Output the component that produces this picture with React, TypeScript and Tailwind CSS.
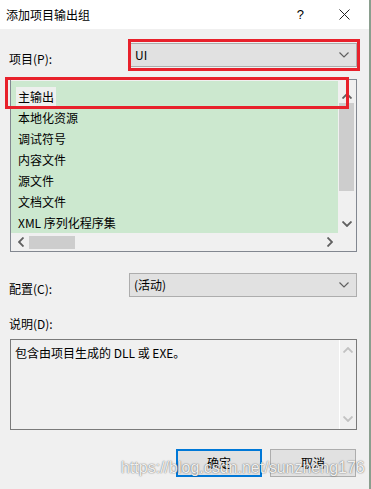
import React from "react";

const font = { fontFamily: '"Noto Sans CJK SC", "Microsoft YaHei", sans-serif' };

function ChevronDown({ color = "#606060", className = "" }: { color?: string; className?: string }) {
  return (
    <svg width="10" height="6" viewBox="0 0 10 6" className={className}>
      <path d="M0.5 0.5 L5 5 L9.5 0.5" fill="none" stroke={color} strokeWidth="1.2" />
    </svg>
  );
}
function ChevronUp({ color = "#606060" }: { color?: string }) {
  return (
    <svg width="10" height="6" viewBox="0 0 10 6">
      <path d="M0.5 5.5 L5 1 L9.5 5.5" fill="none" stroke={color} strokeWidth="1.8" />
    </svg>
  );
}
function ChevronDownBold({ color = "#606060" }: { color?: string }) {
  return (
    <svg width="10" height="6" viewBox="0 0 10 6">
      <path d="M0.5 0.5 L5 5 L9.5 0.5" fill="none" stroke={color} strokeWidth="1.8" />
    </svg>
  );
}
function ChevronLeft() {
  return (
    <svg width="6" height="10" viewBox="0 0 6 10">
      <path d="M5.5 0.5 L1 5 L5.5 9.5" fill="none" stroke="#606060" strokeWidth="1.8" />
    </svg>
  );
}
function ChevronRight() {
  return (
    <svg width="6" height="10" viewBox="0 0 6 10">
      <path d="M0.5 0.5 L5 5 L0.5 9.5" fill="none" stroke="#606060" strokeWidth="1.8" />
    </svg>
  );
}

const items = ["主输出", "本地化资源", "调试符号", "内容文件", "源文件", "文档文件", "XML 序列化程序集"];

export default function App() {
  return (
    <div
      className="relative w-[371px] h-[489px] bg-[#f0f0f0] text-[12px] text-black overflow-hidden border-r-2 border-[#8a9e8e]"
      style={font}
    >
      {/* Title bar */}
      <div className="h-[29px] bg-white flex items-center">
        <span className="ml-[6px] leading-[16px] text-[12px]">添加项目输出组</span>
        <span className="ml-auto mr-[35px] text-[13px] leading-[16px]" style={{ fontFamily: '"Liberation Sans", sans-serif' }}>?</span>
        <svg width="11" height="11" viewBox="0 0 11 11" className="mr-[19px]">
          <path d="M0.5 0.5 L10.5 10.5 M10.5 0.5 L0.5 10.5" stroke="#222" strokeWidth="1" />
        </svg>
      </div>

      {/* Project row */}
      <div className="mt-[14px] flex items-center h-[24px]">
        <span className="w-[129px] pl-[9px] leading-[16px] pt-[8px]">项目(P):</span>
        <div className="w-[228px] h-[24px] bg-[#e1e1e1] border border-[#adadad] flex items-center pl-[5px] pr-[7px]">
          <span className="leading-[16px]">UI</span>
          <ChevronDown className="ml-auto" />
        </div>
      </div>

      {/* List box */}
      <div className="mt-[12px] ml-[10px] w-[347px] h-[173px] border border-[#828790] flex flex-col">
        <div className="flex flex-1 pt-[1px]">
          <div className="w-[327px] bg-[#cce8cf] pt-[5px] pl-[1px]">
            {items.map((it, i) => (
              <div key={it} className="h-[21px] flex items-center">
                <span
                  className={
                    "h-[19px] flex items-center px-[2px] ml-[4px] leading-[16px] " +
                    (i === 0 ? "bg-[#eef0ee]" : "")
                  }
                >
                  {it}
                </span>
              </div>
            ))}
          </div>
          <div className="w-[17px] bg-[#f0f0f0] flex flex-col items-center">
            <div className="h-[22px] flex items-center justify-center pt-[8px]">
              <ChevronUp />
            </div>
            <div className="w-[15px] h-[88px] bg-[#cdcdcd]" />
            <div className="flex-1 flex items-end justify-center pb-[6px]">
              <ChevronDownBold />
            </div>
          </div>
        </div>
        <div className="h-[18px] flex bg-[#f0f0f0]">
          <div className="w-[328px] flex items-center">
            <div className="w-[18px] flex justify-center pl-[2px]">
              <ChevronLeft />
            </div>
            <div className="w-[46px] h-[13px] bg-[#cdcdcd]" />
            <div className="ml-auto w-[17px] flex justify-center pr-[2px]">
              <ChevronRight />
            </div>
          </div>
        </div>
      </div>

      {/* Config row */}
      <div className="mt-[21px] flex items-center h-[24px]">
        <span className="w-[129px] pl-[9px] leading-[16px] pt-[8px]">配置(C):</span>
        <div className="w-[228px] h-[24px] bg-[#e1e1e1] border border-[#adadad] flex items-center pl-[4px] pr-[7px]">
          <span className="leading-[16px]">(活动)</span>
          <ChevronDown className="ml-auto" />
        </div>
      </div>

      {/* Description */}
      <div className="mt-[19px] h-[16px] leading-[16px] pl-[9px]">说明(D):</div>
      <div className="mt-[7px] ml-[10px] w-[347px] h-[91px] border border-[#7a7a7a] flex">
        <div className="flex-1 pl-[4px] pt-[5px] leading-[16px]">包含由项目生成的 DLL 或 EXE。</div>
        <div className="w-[17px] border-l border-white flex flex-col items-center justify-between py-[7px]">
          <ChevronUp color="#c2c2c2" />
          <ChevronDownBold color="#c2c2c2" />
        </div>
      </div>

      {/* Buttons */}
      <div className="mt-[19px] flex justify-end pr-[13px] gap-[8px]">
        <button className="w-[86px] h-[28px] bg-[#e1e1e1] border-2 border-[#0078d7] leading-[16px]">确定</button>
        <button className="w-[86px] h-[28px] bg-[#e1e1e1] border border-[#adadad] leading-[16px]">取消</button>
      </div>

      {/* Red annotation boxes */}
      <div className="absolute left-[128px] top-[39px] w-[232px] h-[32px] border-[3px] border-[#e8212b]" />
      <div className="absolute left-[5px] top-[77px] w-[344px] h-[32px] border-[3px] border-[#e8212b]" />

      {/* Watermark */}
      <div
        className="absolute left-[121px] top-[458px] text-[16px] leading-[20px] text-white/90 whitespace-nowrap"
        style={{
          fontFamily: '"Liberation Sans", Arial, sans-serif',
          textShadow: "0 0 1px rgba(0,0,0,0.55), 0 0 2px rgba(0,0,0,0.3)",
        }}
      >
        https://blog.csdn.net/sunzheng176
      </div>
    </div>
  );
}
